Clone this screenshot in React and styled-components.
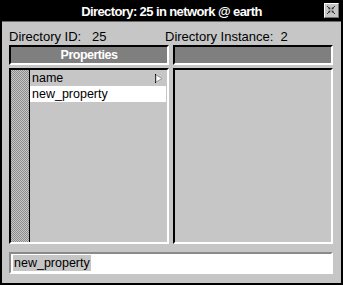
import React from "react";
import styled, { createGlobalStyle } from "styled-components";

const Global = createGlobalStyle`
  html, body { margin: 0; padding: 0; background: #c6c6c6; }
  body { font-family: "Liberation Sans", Arial, sans-serif; }
`;

const Window = styled.div`
  width: 343px;
  height: 285px;
  box-sizing: border-box;
  border: 2px solid #000;
  background: #c6c6c6;
  display: flex;
  flex-direction: column;
`;

const TitleBar = styled.div`
  height: 20px;
  background: #000;
  color: #fff;
  font-weight: bold;
  font-size: 13px;
  letter-spacing: -0.6px;
  display: flex;
  align-items: center;
  justify-content: center;
  position: relative;
  border-bottom: 1px solid #6a6a6a;
`;

const CloseBtn = styled.div`
  position: absolute;
  right: 2px;
  top: 1px;
  width: 15px;
  height: 15px;
  box-sizing: border-box;
  background: #c6c6c6;
  border-top: 1px solid #fff;
  border-left: 1px solid #fff;
  border-right: 1px solid #707070;
  border-bottom: 1px solid #707070;
  display: flex;
`;

const Body = styled.div`
  flex: 1;
  padding: 6px 8px 9px 7px;
  display: flex;
  flex-direction: column;
`;

const InfoRow = styled.div`
  display: grid;
  grid-template-columns: 156px 1fr;
  font-size: 13px;
  color: #000;
  height: 17px;
  line-height: 17px;
`;

const Columns = styled.div`
  display: grid;
  grid-template-columns: 160px 160px;
  column-gap: 4px;
  grid-template-rows: 20px 1fr;
  row-gap: 3px;
  height: 199px;
`;

const Header = styled.div`
  box-sizing: border-box;
  background: #7f7f7f;
  border-top: 2px solid #000;
  border-left: 2px solid #000;
  border-right: 2px solid #fff;
  border-bottom: 2px solid #fff;
  color: #fff;
  font-weight: bold;
  font-size: 12.5px;
  letter-spacing: -0.5px;
  display: flex;
  align-items: center;
  justify-content: center;
`;

const ListBox = styled.div`
  box-sizing: border-box;
  border-top: 2px solid #000;
  border-left: 2px solid #000;
  border-right: 2px solid #fff;
  border-bottom: 2px solid #fff;
  background: #c6c6c6;
  display: flex;
`;

const Stipple = styled.div`
  width: 18px;
  border-right: 1px solid #000;
  background-color: #c6c6c6;
  background-image: conic-gradient(#8c8c8c 25%, transparent 0 50%, #8c8c8c 0 75%, transparent 0);
  background-size: 2px 2px;
`;

const Rows = styled.div`
  flex: 1;
  display: flex;
  flex-direction: column;
  padding-right: 1px;
`;

const Row = styled.div`
  height: 16px;
  line-height: 16px;
  font-size: 12.5px;
  padding-left: 2px;
  color: #000;
  background: ${(p) => (p.$selected ? "#fff" : "transparent")};
  display: flex;
  justify-content: space-between;
  align-items: center;
`;

const Arrow = styled.svg`
  margin-right: 3px;
`;

const InputWrap = styled.div`
  margin-top: 8px;
  height: 22px;
  box-sizing: border-box;
  border-top: 2px solid #8a8a8a;
  border-left: 2px solid #8a8a8a;
  border-right: 2px solid #fff;
  border-bottom: 2px solid #fff;
  background: #fff;
  display: flex;
  align-items: center;
  padding-left: 2px;
`;

const SelText = styled.span`
  background: #c6c6c6;
  font-size: 12.5px;
  line-height: 16px;
  color: #000;
  padding: 0 1px;
`;

export default function App() {
  return (
    <>
      <Global />
      <Window>
        <TitleBar>
          Directory: 25 in network @ earth
          <CloseBtn>
            <svg width="13" height="13" viewBox="0 0 13 13">
              <g stroke="#333" strokeWidth="1" fill="none">
                <path d="M2 2 L5 5 M2 10 L5 7 M10 2 L7 5 M10 10 L7 7" />
              </g>
              <g fill="#333">
                <path d="M5.5 5.5 L3 5 L5 3 Z" />
                <path d="M5.5 6.5 L3 7 L5 9 Z" />
                <path d="M6.5 5.5 L9 5 L7 3 Z" />
                <path d="M6.5 6.5 L9 7 L7 9 Z" />
              </g>
            </svg>
          </CloseBtn>
        </TitleBar>
        <Body>
          <InfoRow>
            <span>Directory ID:&nbsp;&nbsp; 25</span>
            <span>Directory Instance:&nbsp; 2</span>
          </InfoRow>
          <Columns>
            <Header>Properties</Header>
            <Header />
            <ListBox>
              <Stipple />
              <Rows>
                <Row>
                  name
                  <Arrow width="8" height="9" viewBox="0 0 8 9">
                    <path d="M0.5 0 V9" stroke="#000" />
                    <path d="M1 1 L7 4.5 L1 8 Z" fill="#fff" stroke="#888" strokeWidth="0.8" />
                  </Arrow>
                </Row>
                <Row $selected>new_property</Row>
              </Rows>
            </ListBox>
            <ListBox />
          </Columns>
          <InputWrap>
            <SelText>new_property</SelText>
          </InputWrap>
        </Body>
      </Window>
    </>
  );
}
